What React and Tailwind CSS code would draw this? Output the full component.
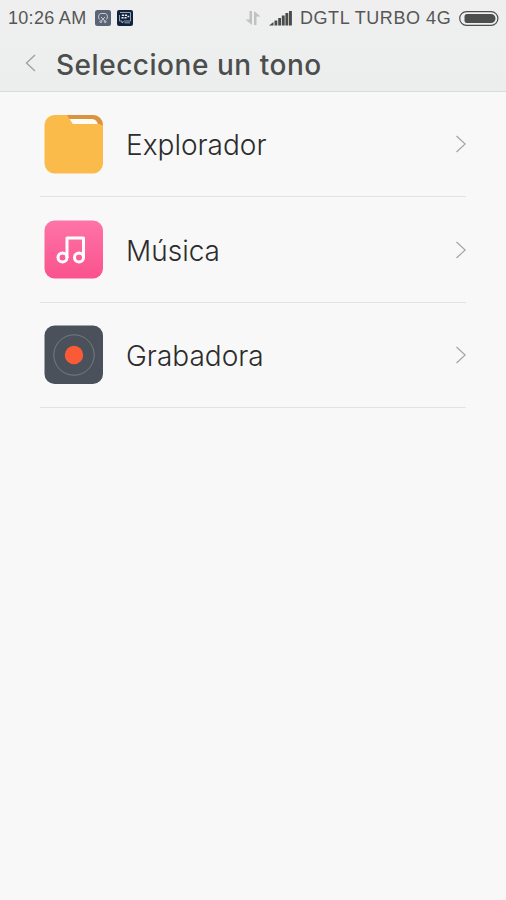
import React from "react";

const FolderIcon = () => (
  <svg className="h-[59px] w-[59px]" viewBox="0 0 59 59">
    <rect x="0.5" y="0" width="58.500" height="58.500" rx="10" fill="#fbbb4a" />
    <path d="M23 0H49a10 10 0 0 1 10 10L50 9.500H29Z" fill="#dc9340" />
    <path d="M25.5 4H48c3.500 .4 5.300 2.500 6 5.500H29Z" fill="#fffdf3" />
    <path d="M28.500 9H56l3 2.500V14H29Z" fill="#fbbb4a" />
  </svg>
);

const MusicIcon = () => (
  <svg className="h-[59px] w-[59px]" viewBox="0 0 59 59">
    <defs>
      <linearGradient id="pink" x1="0" y1="0" x2="0" y2="1">
        <stop offset="0" stopColor="#fe74a6" />
        <stop offset="1" stopColor="#fa528d" />
      </linearGradient>
    </defs>
    <rect x="0.5" y="0.5" width="58.500" height="58" rx="10" fill="url(#pink)" />
    <g fill="none" stroke="#fff" strokeWidth="3">
      <circle cx="18.500" cy="37.500" r="4.500" />
      <circle cx="35" cy="37.500" r="4.500" />
      <path d="M23 38V18H39.500V38" strokeLinejoin="round" />
    </g>
  </svg>
);

const RecorderIcon = () => (
  <svg className="h-[59px] w-[59px]" viewBox="0 0 59 59">
    <rect x="0.500" y="0.500" width="58.500" height="58.500" rx="10" fill="#4b515b" />
    <circle cx="30" cy="30" r="20.200" fill="none" stroke="#737d80" />
    <circle cx="30" cy="30" r="9.200" fill="#fb5a37" />
  </svg>
);

const ChevronRight = () => (
  <svg className="h-[18px] w-[11px]" viewBox="0 0 11 18">
    <path d="M1.500 1L10.200 9L1.500 17" fill="none" stroke="#a3a3a3" strokeWidth="1.200" />
  </svg>
);

const ScissorsBadge = () => (
  <svg className="h-4 w-4" viewBox="0 0 16 16">
    <rect width="16" height="16" rx="2.500" fill="#5b6474" />
    <g fill="none" stroke="#d3d7de" strokeWidth="0.900">
      <path d="M4.500 9.500C3 8 3.300 4 5.500 3.500H10.500C12.700 4 13 8 11.500 9.500" />
      <path d="M6 7L9.800 11M10 7L6.200 11" />
      <circle cx="5.800" cy="11.700" r="0.900" />
      <circle cx="10.200" cy="11.700" r="0.900" />
    </g>
  </svg>
);

const MessengerBadge = () => (
  <svg className="h-4 w-4" viewBox="0 0 16 16">
    <rect width="16" height="16" rx="2" fill="#14233b" />
    <path
      d="M3 2.500H13.500V11H7.500L5 13V11H2.500V5M7.500 12.800H13"
      fill="none"
      stroke="#9db3ca"
      strokeWidth="0.900"
    />
    <path
      d="M5 4.500H7V6H4.700ZM8 4.500H10V6H7.700ZM4.600 7H6.600V8.500H4.300ZM7.600 7H9.600V8.500H7.300ZM10.600 5.800H12.300V7.200H10.400Z"
      fill="#e6edf4"
    />
  </svg>
);

const DataArrows = () => (
  <svg className="h-4 w-4" viewBox="0 0 16 16" fill="#c0c2c2">
    <path d="M4.500 1H7V15L0.500 9.500H4.500Z" />
    <path d="M9 1L15.500 6.500H11.500V15H9Z" />
  </svg>
);

const SignalBars = () => (
  <svg className="h-[15px] w-[23px]" viewBox="0 0 23 15" fill="#4a4c4b">
    <path d="M0 14.500L4.500 11V14.500Z" />
    <rect x="5.500" y="9.500" width="2.800" height="5" />
    <rect x="9.200" y="7" width="2.800" height="7.500" />
    <rect x="12.800" y="4.500" width="2.900" height="10" />
    <rect x="16.400" y="2" width="2.900" height="12.500" />
    <rect x="20" y="0" width="2.900" height="14.500" />
  </svg>
);

const Battery = () => (
  <svg className="h-[15px] w-10" viewBox="0 0 40 15">
    <rect x="0.700" y="0.700" width="38.200" height="13.600" rx="6.800" fill="none" stroke="#4d4f4e" strokeWidth="1.200" />
    <path d="M8 3H32a4.500 4.500 0 0 1 0 9H8a2.500 2.500 0 0 1-2.500-2.500V5.500A2.500 2.500 0 0 1 8 3Z" fill="#4d4f4e" />
  </svg>
);

const items = [
  { name: "Explorador", icon: <FolderIcon /> },
  { name: "Música", icon: <MusicIcon /> },
  { name: "Grabadora", icon: <RecorderIcon /> },
];

const App = () => {
  return (
    <div className="flex h-[900px] w-[506px] flex-col overflow-hidden bg-[#f8f8f8] font-['Liberation_Sans',Arial,sans-serif]">
      <header className="h-[92px] border-b border-[#dadcdc] bg-gradient-to-b from-[#efefef] to-[#eceeee]">
        <div className="flex h-9 items-center pl-2 pr-[7px] text-[#555756]">
          <span className="w-[87px] whitespace-nowrap pt-px text-[18px] tracking-[0.3px]">
            10:26 AM
          </span>
          <ScissorsBadge />
          <div className="ml-1.5">
            <MessengerBadge />
          </div>
          <div className="ml-auto flex items-center">
            <DataArrows />
            <div className="ml-2">
              <SignalBars />
            </div>
            <span className="ml-2 w-[159px] whitespace-nowrap pt-px text-[18px] tracking-[0.55px]">
              DGTL TURBO 4G
            </span>
            <Battery />
          </div>
        </div>
        <div className="flex h-[54px] items-center pl-[25px]">
          <svg className="h-[18px] w-[11px]" viewBox="0 0 11 18">
            <path d="M10 1L1.500 9L10 17" fill="none" stroke="#a0a3a2" strokeWidth="1.400" />
          </svg>
          <h1 className="ml-[20px] whitespace-nowrap pt-[3px] font-['Inter',sans-serif] text-[28px] font-medium leading-none tracking-[0.53px] text-[#4b4e4d]">
            Seleccione un tono
          </h1>
        </div>
      </header>
      <main className="px-10">
        {items.map((item) => (
          <div
            key={item.name}
            className="flex h-[105.4px] items-center border-b border-[#e2e2e2] pl-1"
          >
            {item.icon}
            <span className="ml-[23px] flex-1 pt-0.5 font-['Inter',sans-serif] text-[28px] font-light text-[#2c2c2c]">
              {item.name}
            </span>
            <ChevronRight />
          </div>
        ))}
      </main>
    </div>
  );
};

export default App;
